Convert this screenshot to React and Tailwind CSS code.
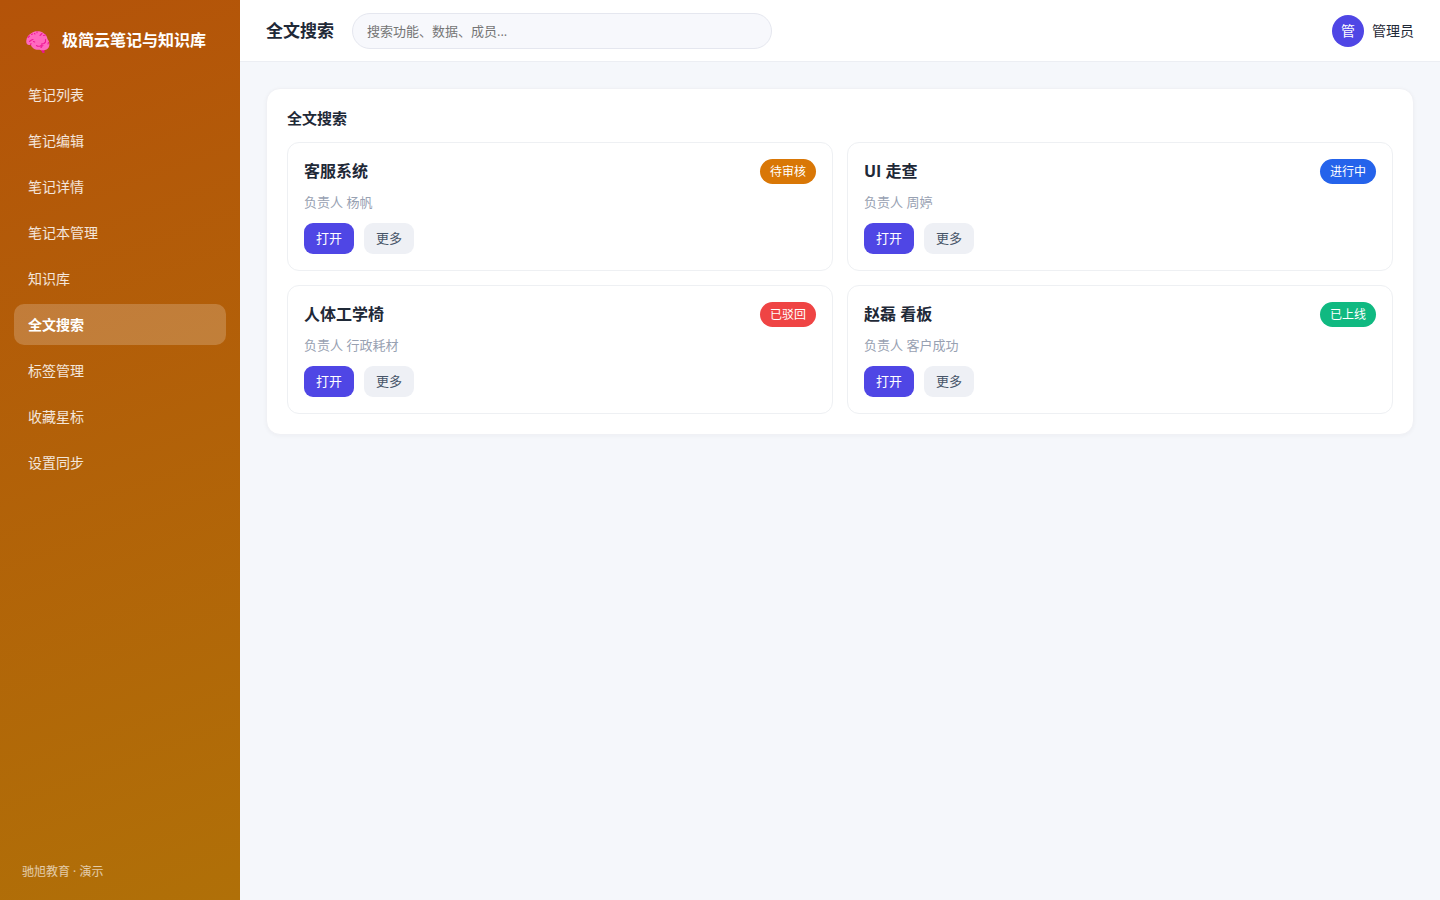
import { useState } from "react";

const navItems = [
    "笔记列表",
    "笔记编辑",
    "笔记详情",
    "笔记本管理",
    "知识库",
    "全文搜索",
    "标签管理",
    "收藏星标",
    "设置同步",
];

const results = [
    { title: "客服系统", owner: "杨帆", status: "待审核", color: "bg-[#d97706]" },
    { title: "UI 走查", owner: "周婷", status: "进行中", color: "bg-[#2563eb]" },
    { title: "人体工学椅", owner: "行政耗材", status: "已驳回", color: "bg-[#ef4444]" },
    { title: "赵磊 看板", owner: "客户成功", status: "已上线", color: "bg-[#10b981]" },
];

const BrainLogo = () => (
    <svg className="w-6 h-7 shrink-0" viewBox="0 -4 24 28" fill="none" aria-hidden="true">
        <path d="M13.500 18.500h5v4.500h-2c-.6-1.600-1.600-2.800-3-4.500z" fill="#e8178a" />
        <path
            d="M.3 10.500C.6 7 3 4.500 5 3.500 6.800 1.800 9 1.200 11.500 1.200c2.500 0 5 .6 6.500 2.300 2 1.200 3.200 3.300 3.500 5.500 1.600 1.700 2.200 4.500 1.800 6.500-.4 2.500-2 4.300-4.300 4.500-2 .6-4 .3-5.500-.2-3 .2-6-.6-7.500-2.800-.8-.8-.8-1.500-1.200-2.500-1.300.8-3 .8-3.800-.5-.8-1-.8-2.300-.7-3.500z"
            fill="#ff69bf"
        />
        <g stroke="#f01c98" strokeWidth="1.100" strokeLinecap="round" strokeLinejoin="round">
            <path d="M2 7.500l1.500-1.500M5.500 4.500l1-.5M11 1.800v1M8.500 3.500l.5.500M14 5.500l2-2M17.500 5.500l2-.5" />
            <path d="M3.500 11.500l2-1.500 1.500-.5M5 13.500l-.5 1.200M7.500 11.500l1.200.5" />
            <path d="M19.500 9.500v2.500l-1.500 1.500-2.500.5M10.500 15.500l1 .8h2.500l1.500-1h1.500M16 16.500l-1 1" />
            <path d="M22.500 12.500l-.5 1.500" />
        </g>
    </svg>
);

const Sidebar = ({ active, onSelect }) => (
    <aside className="w-60 shrink-0 flex flex-col px-3.5 pt-6 pb-[18px] text-white bg-[linear-gradient(160deg,#b45309,#b07008)]">
        <div className="flex items-center gap-3 px-3 h-8 mb-[18px]">
            <BrainLogo />
            <div className="font-bold text-base leading-8 whitespace-nowrap">极简云笔记与知识库</div>
        </div>

        <nav className="flex flex-col gap-[5px]">
            {navItems.map((item) => (
                <a
                    key={item}
                    href="#"
                    aria-current={item === active ? "page" : undefined}
                    className={item === active
                        ? "h-[41px] px-3.5 rounded-[10px] flex items-center text-sm font-bold bg-white/20"
                        : "h-[41px] px-3.5 rounded-[10px] flex items-center text-sm text-white/85 hover:bg-white/10"}
                    onClick={(e) => { e.preventDefault(); onSelect(item); }}
                >
                    {item}
                </a>
            ))}
        </nav>

        <div className="mt-auto px-2 text-xs leading-5 text-white/65">驰旭教育 · 演示</div>
    </aside>
);

const Header = ({ title }) => {
    const [keyword, setKeyword] = useState("");

    return (
        <header className="flex items-center px-[26px] py-3 h-[62px] bg-white border-b border-[#eceef3]">
            <h1 className="text-[17px] font-bold whitespace-nowrap mr-[18px]">{title}</h1>
            <input
                type="search"
                aria-label="搜索"
                className="w-full max-w-[420px] h-9 px-3.5 rounded-full border border-[#e5e7ef] bg-[#f7f8fc] text-[13px] placeholder:text-[#757575]"
                placeholder="搜索功能、数据、成员..."
                value={keyword}
                onChange={(e) => setKeyword(e.target.value)}
            />
            <div className="ml-auto flex items-center gap-2 shrink-0">
                <div className="w-8 h-8 rounded-full bg-[#4f46e5] text-white text-sm flex items-center justify-center">管</div>
                <span className="text-sm">管理员</span>
            </div>
        </header>
    );
};

const ResultCard = ({ item }) => (
    <article className="border border-[#eef0f3] rounded-xl p-4">
        <div className="flex items-center justify-between">
            <h3 className="text-base leading-[25px] font-bold">{item.title}</h3>
            <span className={`${item.color} rounded-full px-2.5 text-xs leading-[25px] text-white`}>{item.status}</span>
        </div>
        <p className="mt-2 text-[13px] leading-5 text-[#98a1b2]">负责人 {item.owner}</p>
        <div className="mt-[11px] flex gap-2.5">
            <button type="button" className="h-[31px] px-3 rounded-[9px] bg-[#4f46e5] text-white text-[13px] cursor-pointer">打开</button>
            <button type="button" className="h-[31px] px-3 rounded-[9px] bg-[#eef0f5] text-[#475569] text-[13px] cursor-pointer">更多</button>
        </div>
    </article>
);

export default function App() {
    const [active, setActive] = useState("全文搜索");

    return (
        <div className="min-h-screen flex bg-[#f5f7fb] text-[#1f2937] font-['Open_Sans','Noto_Sans_CJK_SC',sans-serif]">
            <Sidebar active={active} onSelect={setActive} />
            <div className="flex-1 min-w-0">
                <Header title={active} />
                <main className="p-[26px]">
                    <section className="bg-white border border-[#f0f1f5] rounded-[14px] p-5 shadow-[0_1px_4px_rgba(15,23,42,0.04)]">
                        <h2 className="text-[15px] leading-[19px] font-bold mb-3.5">{active}</h2>
                        <div className="grid grid-cols-2 gap-3.5">
                            {results.map((item) => (
                                <ResultCard key={item.title} item={item} />
                            ))}
                        </div>
                    </section>
                </main>
            </div>
        </div>
    );
}
